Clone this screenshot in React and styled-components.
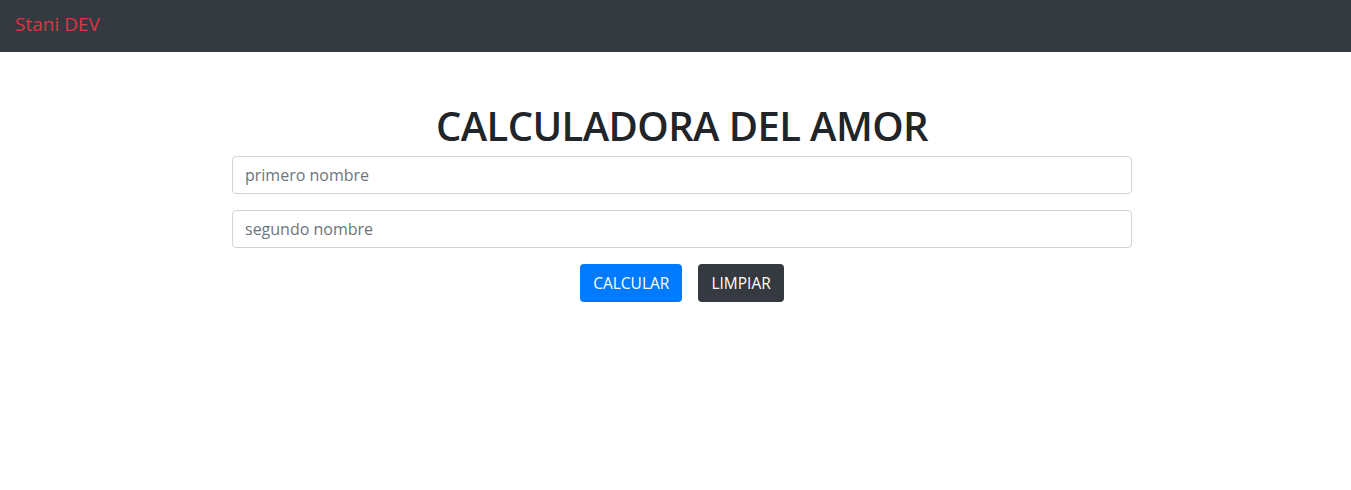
import React from "react";
import styled, { createGlobalStyle } from "styled-components";

const GlobalStyle = createGlobalStyle`
  body {
    margin: 0;
    background: #fff;
    font-family: "Open Sans", "Noto Sans", sans-serif;
    color: #212529;
  }
  * {
    box-sizing: border-box;
  }
`;

const Navbar = styled.nav`
  height: 52px;
  background: #343a40;
  display: flex;
  align-items: center;
  padding: 0 15px;
`;

const Brand = styled.a`
  color: #dc3545;
  font-size: 19px;
  line-height: 1;
  text-decoration: none;
  margin-top: -3px;
`;

const Main = styled.main`
  padding-left: 13px;
`;

const Container = styled.div`
  width: 900px;
  margin: 0 auto;
  display: flex;
  flex-direction: column;
  align-items: stretch;
`;

const Title = styled.h1`
  margin: 50px 0 6px;
  font-size: 40px;
  line-height: 48px;
  font-weight: 600;
  letter-spacing: -0.6px;
  text-align: center;
  color: #212529;
`;

const Input = styled.input`
  height: 38px;
  padding: 6px 12px;
  margin-bottom: 16px;
  border: 1px solid #ced4da;
  border-radius: 4px;
  font-family: inherit;
  font-size: 16px;
  color: #495057;
  &::placeholder {
    color: #6c757d;
  }
`;

const Actions = styled.div`
  display: flex;
  justify-content: center;
  gap: 16px;
`;

const Button = styled.button`
  height: 38px;
  padding: 0 13px;
  border: none;
  border-radius: 4px;
  font-family: inherit;
  font-size: 15.5px;
  color: #fff;
  background: ${(p) => (p.$variant === "dark" ? "#343a40" : "#007bff")};
  cursor: pointer;
`;

function App() {
  return (
    <>
      <GlobalStyle />
      <Navbar>
        <Brand href="#">Stani DEV</Brand>
      </Navbar>
      <Main>
        <Container>
          <Title>CALCULADORA DEL AMOR</Title>
          <Input placeholder="primero nombre" />
          <Input placeholder="segundo nombre" />
          <Actions>
            <Button>CALCULAR</Button>
            <Button $variant="dark">LIMPIAR</Button>
          </Actions>
        </Container>
      </Main>
    </>
  );
}

export default App;
